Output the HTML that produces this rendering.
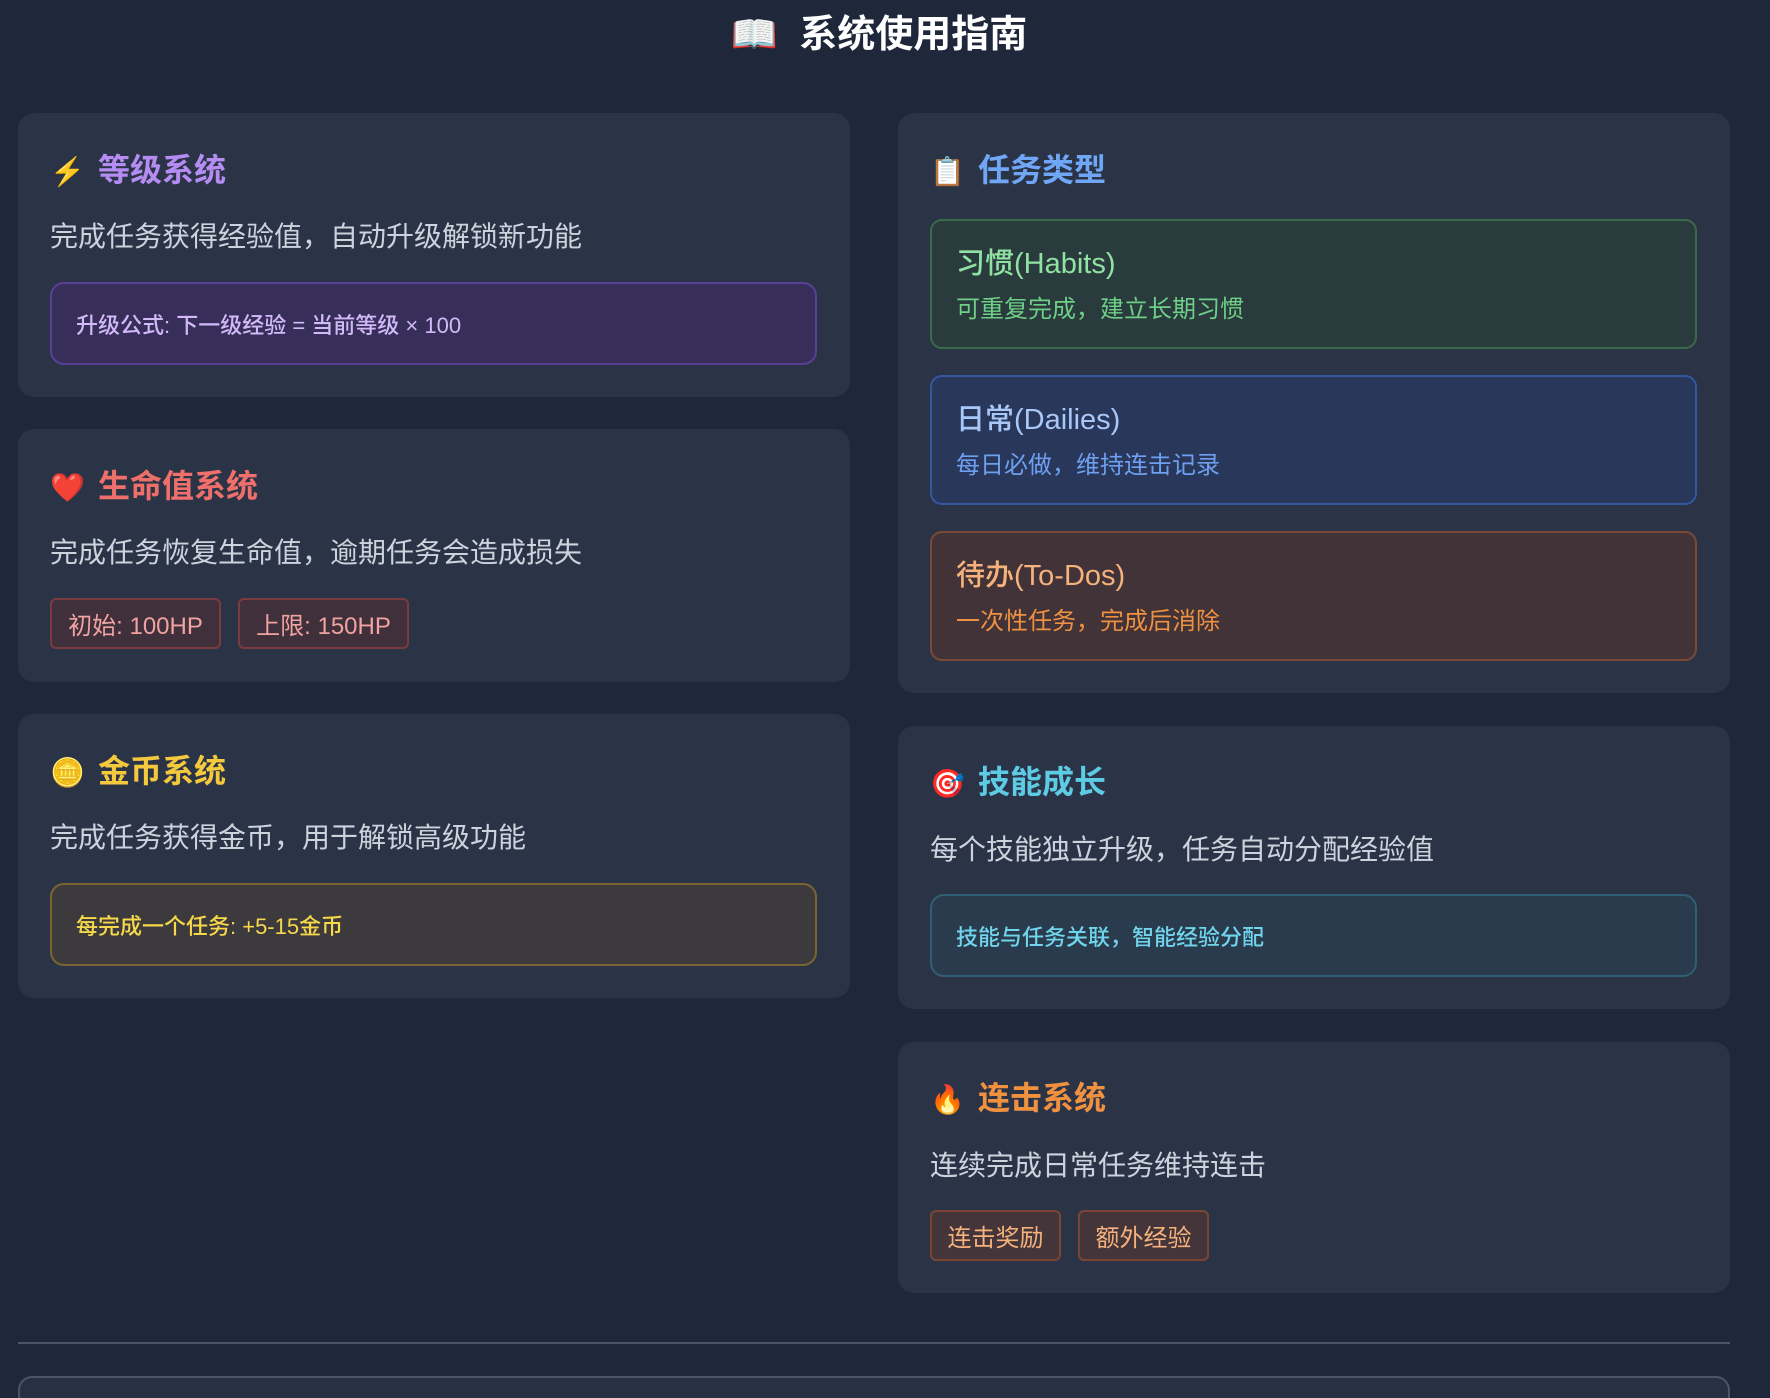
<!DOCTYPE html>
<html style="width:1770px;height:1398px;overflow:hidden"><head><meta charset="utf-8"><style>
*{margin:0;padding:0;box-sizing:border-box}
body{width:1770px;height:1398px;overflow:hidden;background:#1f283a;font-family:"Liberation Sans","Noto Sans CJK SC",sans-serif;position:relative;color:#cbd2dc}
.a{position:absolute}
.card{position:absolute;background:#2b3447;border-radius:16px}
.h{position:absolute;left:32px;font-size:32px;font-weight:bold;line-height:38px;white-space:nowrap}
.h .i{display:inline-block;width:48px;font-size:28px;font-weight:normal}
.d{position:absolute;left:32px;font-size:28px;line-height:34px;color:#cdd3dd;white-space:nowrap}
.box{position:absolute;left:32px;border:2px solid;border-radius:14px;font-size:22px;font-weight:500;padding-left:24px;display:flex;align-items:center}
.tag{position:absolute;border:2px solid;border-radius:6px;font-size:24px;display:flex;align-items:center;justify-content:center}
.tb{position:absolute;left:32px;width:767px;height:130px;border:2px solid;border-radius:12px}
.tb .t{position:absolute;left:24px;top:26px;font-size:29px;line-height:34px;font-weight:500}
.tb .s{position:absolute;left:24px;top:74px;font-size:24px;line-height:30px}
</style></head><body>
<div class="a" style="left:0;width:1770px;top:12px;text-align:center;font-size:38px;font-weight:bold;color:#fff;line-height:46px;padding-right:12px">📖&nbsp; 系统使用指南</div>

<div class="card" style="left:18px;top:113px;width:832px;height:284px">
 <div class="h" style="top:38px;color:#b48cf2"><span class="i">⚡</span>等级系统</div>
 <div class="d" style="top:107px">完成任务获得经验值，自动升级解锁新功能</div>
 <div class="box" style="top:169px;width:767px;height:83px;background:#382e5a;border-color:#5a3f96;color:#d2baf8">升级公式: 下一级经验 = 当前等级 × 100</div>
</div>

<div class="card" style="left:18px;top:429px;width:832px;height:253px">
 <div class="h" style="top:38px;color:#ef6f6b"><span class="i">❤️</span>生命值系统</div>
 <div class="d" style="top:107px">完成任务恢复生命值，逾期任务会造成损失</div>
 <div class="tag" style="left:32px;top:169px;width:171px;height:51px;background:#40303b;border-color:#7a3b3e;color:#f0a3a0">初始: 100HP</div>
 <div class="tag" style="left:220px;top:169px;width:171px;height:51px;background:#40303b;border-color:#7a3b3e;color:#f0a3a0">上限: 150HP</div>
</div>

<div class="card" style="left:18px;top:714px;width:832px;height:284px">
 <div class="h" style="top:38px;color:#f5c93e"><span class="i">🪙</span>金币系统</div>
 <div class="d" style="top:107px">完成任务获得金币，用于解锁高级功能</div>
 <div class="box" style="top:169px;width:767px;height:83px;background:#3d3a3d;border-color:#7a6532;color:#f7d84a">每完成一个任务: +5-15金币</div>
</div>

<div class="card" style="left:898px;top:113px;width:832px;height:580px">
 <div class="h" style="top:38px;color:#6fa6f6"><span class="i">📋</span>任务类型</div>
 <div class="tb" style="top:106px;background:#2a3b3e;border-color:#3c6a48"><div class="t" style="color:#90e2a2">习惯(Habits)</div><div class="s" style="color:#6ecf86">可重复完成，建立长期习惯</div></div>
 <div class="tb" style="top:262px;background:#28375a;border-color:#3457a0"><div class="t" style="color:#a9c8f8">日常(Dailies)</div><div class="s" style="color:#6ea0ef">每日必做，维持连击记录</div></div>
 <div class="tb" style="top:418px;background:#413337;border-color:#7a4a36"><div class="t" style="color:#f6b27c">待办(To-Dos)</div><div class="s" style="color:#ef9142">一次性任务，完成后消除</div></div>
</div>

<div class="card" style="left:898px;top:726px;width:832px;height:283px">
 <div class="h" style="top:37px;color:#5ecbe4"><span class="i">🎯</span>技能成长</div>
 <div class="d" style="top:107px">每个技能独立升级，任务自动分配经验值</div>
 <div class="box" style="top:168px;width:767px;height:83px;background:#293b4c;border-color:#2e5f74;color:#70d4ec">技能与任务关联，智能经验分配</div>
</div>

<div class="card" style="left:898px;top:1042px;width:832px;height:251px">
 <div class="h" style="top:37px;color:#f0913f"><span class="i">🔥</span>连击系统</div>
 <div class="d" style="top:107px">连续完成日常任务维持连击</div>
 <div class="tag" style="left:32px;top:168px;width:131px;height:51px;background:#44353a;border-color:#7a4632;color:#f6b27c">连击奖励</div>
 <div class="tag" style="left:180px;top:168px;width:131px;height:51px;background:#44353a;border-color:#7a4632;color:#f6b27c">额外经验</div>
</div>

<div class="a" style="left:18px;top:1342px;width:1712px;height:2px;background:#4a5668"></div>
<div class="a" style="left:18px;top:1376px;width:1712px;height:22px;background:#263244;border:2px solid #4a5668;border-bottom:none;border-radius:14px 14px 0 0"></div>
</body></html>
